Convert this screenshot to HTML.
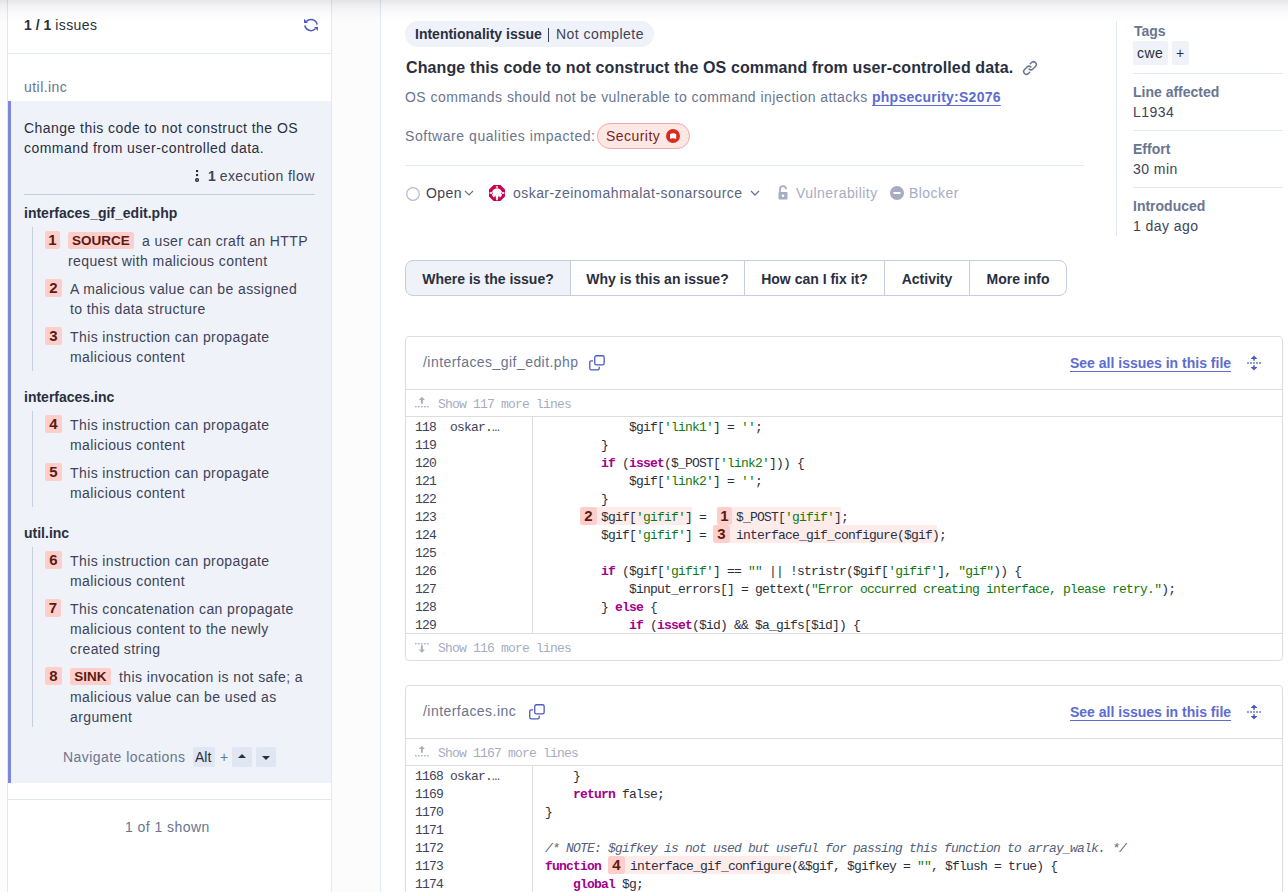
<!DOCTYPE html>
<html><head><meta charset="utf-8">
<style>
*{box-sizing:border-box;margin:0;padding:0}
html,body{width:1288px;height:892px;overflow:hidden;background:#fff}
body{font-family:"Liberation Sans",sans-serif;font-size:14px;line-height:20px;color:#3e4357;position:relative}
.a{position:absolute;white-space:nowrap}
.rg{letter-spacing:0.45px}
.sub{color:#6a7590}
.b{font-weight:700}
#shadow{position:absolute;left:0;top:0;width:1288px;height:22px;background:linear-gradient(rgba(20,25,50,0.11),rgba(20,25,50,0.06) 25%,rgba(20,25,50,0.025) 55%,rgba(20,25,50,0));z-index:50;pointer-events:none}
/* left */
#lgut{position:absolute;left:0;top:0;width:8px;height:892px;background:#fcfcfd;border-right:1px solid #e1e6f3}
#mgut{position:absolute;left:331px;top:0;width:50px;height:892px;background:#fcfcfd;border-left:1px solid #e1e6f3;border-right:1px solid #e1e6f3}
#sel{position:absolute;left:8px;top:101px;width:323px;height:682px;background:#eff2f9;border-left:3px solid #7e86d9}
.hl{position:absolute;height:1px;background:#e1e6f3}
.vl{position:absolute;width:1px;background:#c5cddf}
.badge{position:absolute;height:18px;background:#fecfca;color:#5c1a12;font-weight:700;font-size:15px;line-height:18px;text-align:center;border-radius:2px}
.item{position:absolute;left:70px;width:250px;white-space:normal;line-height:20px;letter-spacing:0.4px}
.kbd{position:absolute;height:20px;background:#e1e6f3;border-radius:2px;top:747px}
/* main */
.pill{position:absolute;border-radius:14px}
.tab{position:absolute;top:260px;height:36px;border:1px solid #c5cddf;font-weight:700;color:#2a2f40;line-height:36px;text-align:center;background:#fff}
.box{position:absolute;left:405px;width:878px;border:1px solid #dddddd;border-radius:4px;background:#fff;overflow:hidden}
.mono{font-family:"Liberation Mono",monospace;font-size:13px;letter-spacing:-0.8px}
.ln{position:absolute;left:9px;color:#3e4357}
.code{position:absolute;white-space:pre;color:#2a2f40}
.k{color:#a3008c;font-weight:700}
.s{color:#11790f}
.c{color:#56607a;font-style:italic}
.cb{position:absolute;height:18px;background:#fecfca;color:#5c1a12;font-weight:700;font-family:"Liberation Sans",sans-serif;font-size:15px;line-height:18px;text-align:center;border-radius:2px}
.chl{position:absolute;height:18px;background:#feeceb}
</style></head><body>
<div id="shadow"></div>
<div id="lgut"></div>
<div id="mgut"></div>
<div id="sel"></div>

<!-- LEFT PANEL -->
<div class="hl" style="left:8px;top:53px;width:323px"></div>
<div class="a" style="left:24px;top:15px;color:#2a2f40"><span class="b">1 / 1</span> <span class="rg">issues</span></div>
<svg class="a" style="left:298px;top:12px" width="26" height="26" viewBox="0 0 26 26"><g fill="none" stroke="#4b5bc0" stroke-width="1.5"><path d="M19.2 12.6A6.3 6.3 0 0 0 8.3 9.6"/><path d="M6.8 13.4A6.3 6.3 0 0 0 17.4 16.8"/></g><path d="M6 6.8V10.9H10z" fill="#4b5bc0"/><path d="M16 15.1H20V19.1z" fill="#4b5bc0"/></svg>
<div class="a sub rg" style="left:24px;top:77px">util.inc</div>
<div class="a rg" style="left:24px;top:118px;color:#2a2f40;line-height:20px">Change this code to not construct the OS<br>command from user-controlled data.</div>
<div class="a" style="left:191px;top:166px;color:#3e4357"><svg style="position:absolute;left:3.2px;top:3px" width="6" height="16" viewBox="0 0 6 16"><rect x="2" y="1" width="2.1" height="2.1" fill="#2a2f40"/><rect x="2" y="5" width="2.1" height="2.1" fill="#2a2f40"/><circle cx="3.05" cy="11" r="1.45" fill="#8a91a8" stroke="#2a2f40" stroke-width="1.2"/></svg><span style="margin-left:17px" class="b">1</span> <span class="rg">execution flow</span></div>
<div class="hl" style="left:24px;top:194px;width:291px;background:#c5cddf"></div>

<div class="a b" style="left:24px;top:203px;color:#2a2f40">interfaces_gif_edit.php</div>
<div class="vl" style="left:32px;top:227px;height:144px"></div>
<div class="badge" style="left:45px;top:231px;width:15px">1</div>
<div class="badge" style="left:68px;top:232px;width:66px;height:17px;line-height:17px;font-size:13.5px">SOURCE</div>
<div class="item" style="top:231px;left:68px"><span style="display:inline-block;width:74px"></span>a user can craft an HTTP<br>request with malicious content</div>
<div class="badge" style="left:45px;top:279px;width:17px">2</div>
<div class="item" style="top:279px">A malicious value can be assigned<br>to this data structure</div>
<div class="badge" style="left:45px;top:327px;width:17px">3</div>
<div class="item" style="top:327px">This instruction can propagate<br>malicious content</div>

<div class="a b" style="left:24px;top:387px;color:#2a2f40">interfaces.inc</div>
<div class="vl" style="left:32px;top:411px;height:96px"></div>
<div class="badge" style="left:45px;top:415px;width:17px">4</div>
<div class="item" style="top:415px">This instruction can propagate<br>malicious content</div>
<div class="badge" style="left:45px;top:463px;width:17px">5</div>
<div class="item" style="top:463px">This instruction can propagate<br>malicious content</div>

<div class="a b" style="left:24px;top:523px;color:#2a2f40">util.inc</div>
<div class="vl" style="left:32px;top:547px;height:180px"></div>
<div class="badge" style="left:45px;top:551px;width:17px">6</div>
<div class="item" style="top:551px">This instruction can propagate<br>malicious content</div>
<div class="badge" style="left:45px;top:599px;width:16px">7</div>
<div class="item" style="top:599px">This concatenation can propagate<br>malicious content to the newly<br>created string</div>
<div class="badge" style="left:45px;top:667px;width:17px">8</div>
<div class="badge" style="left:70px;top:668px;width:41px;height:17px;line-height:17px;font-size:13.5px">SINK</div>
<div class="item" style="top:667px"><span style="display:inline-block;width:49px"></span>this invocation is not safe; a<br>malicious value can be used as<br>argument</div>

<div class="a sub rg" style="left:63px;top:747px">Navigate locations</div>
<div class="kbd" style="left:193px;width:22px"></div>
<div class="a" style="left:195px;top:747px;color:#2a2f40">Alt</div>
<div class="a sub" style="left:220px;top:747px">+</div>
<div class="kbd" style="left:232px;width:20px"></div>
<svg class="a" style="left:237px;top:753px" width="10" height="6"><path d="M1 5L5 1L9 5z" fill="#2a2f40"/></svg>
<div class="kbd" style="left:256px;width:20px"></div>
<svg class="a" style="left:261px;top:755px" width="10" height="6"><path d="M1 1L5 5L9 1z" fill="#2a2f40"/></svg>

<div class="hl" style="left:8px;top:799px;width:323px"></div>
<div class="a sub rg" style="left:125px;top:817px">1 of 1 shown</div>

<!-- MAIN HEADER -->
<div class="pill" style="left:405px;top:21px;width:249px;height:26px;background:#eff2f9"></div>
<div class="a b" style="left:415px;top:24px;color:#2a2f40">Intentionality issue</div>
<div class="a" style="left:548px;top:28px;width:1px;height:14px;background:#3e4357"></div>
<div class="a rg" style="left:556px;top:24px;color:#3e4357">Not complete</div>
<div class="a b" style="left:406px;top:56px;font-size:16px;line-height:24px;color:#2a2f40;letter-spacing:0.12px">Change this code to not construct the OS command from user-controlled data.</div>
<svg class="a" style="left:1021.8px;top:59.5px" width="16" height="16" viewBox="0 0 16 16"><path fill="#6a7590" d="M7.775 3.275a.75.75 0 0 0 1.06 1.06l1.25-1.25a2 2 0 1 1 2.83 2.83l-2.5 2.5a2 2 0 0 1-2.83 0 .75.75 0 0 0-1.06 1.06 3.5 3.5 0 0 0 4.95 0l2.5-2.5a3.5 3.5 0 0 0-4.950-4.95l-1.25 1.25Zm-4.69 9.64a2 2 0 0 1 0-2.83l2.5-2.5a2 2 0 0 1 2.83 0 .75.75 0 0 0 1.06-1.06 3.5 3.5 0 0 0-4.95 0l-2.5 2.5a3.5 3.5 0 0 0 4.95 4.95l1.25-1.25a.75.75 0 0 0-1.06-1.06l-1.25 1.25a2 2 0 0 1-2.83 0Z"/></svg>
<div class="a sub rg" style="left:405px;top:87px">OS commands should not be vulnerable to command injection attacks</div>
<div class="a b" style="left:872px;top:87px;color:#5d6cd0;text-decoration:underline;text-underline-offset:3px;letter-spacing:0.25px">phpsecurity:S2076</div>
<div class="a sub rg" style="left:405px;top:126px;letter-spacing:0.55px">Software qualities impacted:</div>
<div class="pill" style="left:597px;top:123px;width:93px;height:26px;background:#fee8e6;border:1px solid #f5a8a1"></div>
<div class="a rg" style="left:606px;top:126px;color:#7d1f17">Security</div>
<svg class="a" style="left:666px;top:129px" width="14" height="14" viewBox="0 0 14 14"><circle cx="7" cy="7" r="7" fill="#d92b1e"/><path d="M4 5.2Q7 3.4 10.2 5.2V10Q7 8.4 4 10Z" fill="#fff"/></svg>
<div class="hl" style="left:405px;top:165px;width:679px"></div>

<svg class="a" style="left:406px;top:187px" width="14" height="14" viewBox="0 0 14 14"><circle cx="7" cy="7" r="6.3" fill="none" stroke="#b4bbd0" stroke-width="1.2"/></svg>
<div class="a rg" style="left:426px;top:183px;color:#3e4357">Open</div>
<svg class="a" style="left:464px;top:189px" width="10" height="8" viewBox="0 0 10 8"><path d="M1 2L5 6L9 2" fill="none" stroke="#6a7590" stroke-width="1.2"/></svg>
<svg class="a" style="left:489px;top:185px" width="16" height="16" viewBox="0 0 16 16"><path d="M4.6 0H11.4L16 4.6V11.4L11.4 16H4.6L0 11.4V4.6z" fill="#c9004f"/><circle cx="8" cy="8.4" r="5.2" fill="#fff"/><path d="M2.2 6.6L4.2 8.2L2.6 9.8z M13.8 6.6L11.8 8.2L13.4 9.8z" fill="#c9004f"/><rect x="6.8" y="1.2" width="2.4" height="1.6" rx="0.8" fill="#fff"/><rect x="0.6" y="7.2" width="2.6" height="1.6" fill="#fff"/><rect x="12.8" y="7.2" width="2.6" height="1.6" fill="#fff"/><path d="M4.6 13.6L6.2 10.6L7.2 13.6z M8.8 13.6L9.8 10.6L11.4 13.6z" fill="#c9004f"/><rect x="7.2" y="12.8" width="1.6" height="2.4" fill="#fff"/></svg>
<div class="a rg" style="left:513px;top:183px;color:#5b6383">oskar-zeinomahmalat-sonarsource</div>
<svg class="a" style="left:750px;top:189px" width="10" height="8" viewBox="0 0 10 8"><path d="M1 2L5 6L9 2" fill="none" stroke="#6a7590" stroke-width="1.3"/></svg>
<svg class="a" style="left:777px;top:185px" width="12" height="15" viewBox="0 0 12 15"><path d="M3 7V4.2A3 3 0 0 1 9 4.2" fill="none" stroke="#a6adc2" stroke-width="1.8"/><rect x="1.5" y="7" width="9" height="7.5" rx="1" fill="#a6adc2"/><circle cx="6" cy="10.7" r="1.3" fill="#fff"/></svg>
<div class="a rg" style="left:796px;top:183px;color:#a6adc2">Vulnerability</div>
<svg class="a" style="left:890px;top:186px" width="14" height="14" viewBox="0 0 14 14"><circle cx="7" cy="7" r="7" fill="#a6adc2"/><rect x="3.5" y="6" width="7" height="2" fill="#fff"/></svg>
<div class="a rg" style="left:909px;top:183px;color:#a6adc2">Blocker</div>

<!-- RIGHT SIDEBAR -->
<div class="a" style="left:1116px;top:21px;width:1px;height:215px;background:#e1e6f3"></div>
<div class="a b sub" style="left:1134px;top:21px">Tags</div>
<div class="a" style="left:1133px;top:41px;width:35px;height:24px;background:#eff2f9;border-radius:2px"></div>
<div class="a rg" style="left:1137px;top:43px;color:#2a2f40">cwe</div>
<div class="a" style="left:1172px;top:41px;width:17px;height:24px;background:#eff2f9;border-radius:2px"></div>
<div class="a" style="left:1176px;top:43px;color:#2a2f40">+</div>
<div class="hl" style="left:1133px;top:73px;width:150px"></div>
<div class="a b sub" style="left:1133px;top:82px">Line affected</div>
<div class="a rg" style="left:1133px;top:102px;color:#3e4357">L1934</div>
<div class="hl" style="left:1133px;top:130px;width:150px"></div>
<div class="a b sub" style="left:1133px;top:139px">Effort</div>
<div class="a rg" style="left:1133px;top:159px;color:#3e4357">30 min</div>
<div class="hl" style="left:1133px;top:187px;width:150px"></div>
<div class="a b sub" style="left:1133px;top:196px">Introduced</div>
<div class="a rg" style="left:1133px;top:216px;color:#3e4357">1 day ago</div>

<!-- TABS -->
<div class="tab" style="left:405px;width:166px;background:#eff2f9;border-radius:8px 0 0 8px">Where is the issue?</div>
<div class="tab" style="left:570px;width:175px">Why is this an issue?</div>
<div class="tab" style="left:744px;width:141px">How can I fix it?</div>
<div class="tab" style="left:884px;width:86px">Activity</div>
<div class="tab" style="left:969px;width:98px;border-radius:0 8px 8px 0">More info</div>
<!-- CODE -->
<div class="box" style="top:336px;height:325px"></div>
<div class="a sub rg" style="left:423px;top:352px">/interfaces_gif_edit.php</div>
<svg class="a" style="left:587px;top:354px" width="20" height="20" viewBox="0 0 20 20"><g fill="none" stroke="#4b5bc0" stroke-width="1.3" stroke-linecap="round"><rect x="7.75" y="1.75" width="9.4" height="9.2" rx="1.6"/><path d="M5.6 6.85H4.35A1.6 1.6 0 0 0 2.75 8.45V14.25A1.6 1.6 0 0 0 4.35 15.85H10.65A1.6 1.6 0 0 0 12.25 14.25V13.2"/></g></svg>
<div class="a b" style="left:1070px;top:353px;color:#5d6cd0;text-decoration:underline;text-underline-offset:3px">See all issues in this file</div>
<svg class="a" style="left:1246px;top:355px" width="16" height="16" viewBox="0 0 16 16"><path fill="#4b5bc0" d="m8.177.677 2.896 2.896a.25.25 0 0 1-.177.427H8.75v1.25a.75.75 0 0 1-1.5 0V4H5.104a.25.25 0 0 1-.177-.427L7.823.677a.25.25 0 0 1 .354 0ZM7.25 10.75a.75.75 0 0 1 1.5 0V12h2.146a.25.25 0 0 1 .177.427l-2.896 2.896a.25.25 0 0 1-.354 0l-2.896-2.896A.25.25 0 0 1 5.104 12H7.25v-1.25Zm-5-2a.75.75 0 0 0 0-1.5h-.5a.75.75 0 0 0 0 1.5h.5ZM6 8a.75.75 0 0 1-.75.75h-.5a.75.75 0 0 1 0-1.5h.5A.75.75 0 0 1 6 8Zm2.25.75a.75.75 0 0 0 0-1.5h-.5a.75.75 0 0 0 0 1.5h.5ZM12 8a.75.75 0 0 1-.75.75h-.5a.75.75 0 0 1 0-1.5h.5A.75.75 0 0 1 12 8Zm2.25.75a.75.75 0 0 0 0-1.5h-.5a.75.75 0 0 0 0 1.5h.5Z"/></svg>
<div class="hl" style="left:405px;top:389px;width:878px;background:#dddddd"></div>
<svg class="a" style="left:415px;top:395px" width="16" height="16" viewBox="0 0 16 16"><g fill="#a6adc2"><path d="M3.9 5L6.9 1.8L9.9 5z"/><rect x="5.95" y="4.6" width="1.9" height="4.1"/><rect x="0.1" y="11" width="1.5" height="1.4"/><rect x="3.1" y="11" width="1.5" height="1.4"/><rect x="6.1" y="11" width="1.5" height="1.4"/><rect x="9.1" y="11" width="1.5" height="1.4"/><rect x="12.1" y="11" width="1.5" height="1.4"/></g></svg>
<div class="a mono" style="left:438px;top:396px;line-height:18px;color:#a6adc2">Show 117 more lines</div>
<div class="hl" style="left:405px;top:416px;width:878px;background:#dddddd"></div>
<div class="a" style="left:532px;top:417px;width:1px;height:216px;background:#dddddd"></div>
<div class="chl" style="left:597px;top:507px;width:95px"></div>
<div class="chl" style="left:732px;top:507px;width:109px"></div>
<div class="chl" style="left:730px;top:525px;width:207px"></div>
<div class="cb" style="left:580px;top:507px;width:17px">2</div>
<div class="cb" style="left:717px;top:507px;width:15px">1</div>
<div class="cb" style="left:713px;top:525px;width:17px">3</div>
<div class="a mono" style="left:415px;top:419px;line-height:18px;color:#3e4357">118</div>
<div class="a mono" style="left:415px;top:437px;line-height:18px;color:#3e4357">119</div>
<div class="a mono" style="left:415px;top:455px;line-height:18px;color:#3e4357">120</div>
<div class="a mono" style="left:415px;top:473px;line-height:18px;color:#3e4357">121</div>
<div class="a mono" style="left:415px;top:491px;line-height:18px;color:#3e4357">122</div>
<div class="a mono" style="left:415px;top:509px;line-height:18px;color:#3e4357">123</div>
<div class="a mono" style="left:415px;top:527px;line-height:18px;color:#3e4357">124</div>
<div class="a mono" style="left:415px;top:545px;line-height:18px;color:#3e4357">125</div>
<div class="a mono" style="left:415px;top:563px;line-height:18px;color:#3e4357">126</div>
<div class="a mono" style="left:415px;top:581px;line-height:18px;color:#3e4357">127</div>
<div class="a mono" style="left:415px;top:599px;line-height:18px;color:#3e4357">128</div>
<div class="a mono" style="left:415px;top:617px;line-height:18px;color:#3e4357">129</div>
<div class="a mono" style="left:450px;top:419px;line-height:18px;color:#3e4357">oskar.…</div>
<div class="code mono" style="left:545px;top:419px;line-height:18px">            $gif[<span class="s">'link1'</span>] = <span class="s">''</span>;</div>
<div class="code mono" style="left:545px;top:437px;line-height:18px">        }</div>
<div class="code mono" style="left:545px;top:455px;line-height:18px">        <span class="k">if</span> (<span class="k">isset</span>($_POST[<span class="s">'link2'</span>])) {</div>
<div class="code mono" style="left:545px;top:473px;line-height:18px">            $gif[<span class="s">'link2'</span>] = <span class="s">''</span>;</div>
<div class="code mono" style="left:545px;top:491px;line-height:18px">        }</div>
<div class="code mono" style="left:545px;top:509px;line-height:18px">        $gif[<span class="s">'gifif'</span>] = <span style="display:inline-block;width:23px"></span>$_POST[<span class="s">'gifif'</span>];</div>
<div class="code mono" style="left:545px;top:527px;line-height:18px">        $gif[<span class="s">'gifif'</span>] = <span style="display:inline-block;width:23px"></span>interface_gif_configure($gif);</div>
<div class="code mono" style="left:545px;top:545px;line-height:18px"></div>
<div class="code mono" style="left:545px;top:563px;line-height:18px">        <span class="k">if</span> ($gif[<span class="s">'gifif'</span>] == <span class="s">""</span> || !stristr($gif[<span class="s">'gifif'</span>], <span class="s">"gif"</span>)) {</div>
<div class="code mono" style="left:545px;top:581px;line-height:18px">            $input_errors[] = gettext(<span class="s">"Error occurred creating interface, please retry."</span>);</div>
<div class="code mono" style="left:545px;top:599px;line-height:18px">        } <span class="k">else</span> {</div>
<div class="code mono" style="left:545px;top:617px;line-height:18px">            <span class="k">if</span> (<span class="k">isset</span>($id) &amp;&amp; $a_gifs[$id]) {</div>
<div class="hl" style="left:405px;top:633px;width:878px;background:#dddddd"></div>
<svg class="a" style="left:415px;top:639px" width="16" height="16" viewBox="0 0 16 16"><g fill="#a6adc2"><rect x="0.1" y="4" width="1.5" height="1.4"/><rect x="3.1" y="4" width="1.5" height="1.4"/><rect x="6.1" y="4" width="1.5" height="1.4"/><rect x="9.1" y="4" width="1.5" height="1.4"/><rect x="12.1" y="4" width="1.5" height="1.4"/><rect x="5.95" y="6.3" width="1.9" height="4.4"/><path d="M3.9 10.4L6.9 14L9.9 10.4z"/></g></svg>
<div class="a mono" style="left:438px;top:640px;line-height:18px;color:#a6adc2">Show 116 more lines</div><div class="box" style="top:685px;height:226px"></div>
<div class="a sub rg" style="left:423px;top:701px">/interfaces.inc</div>
<svg class="a" style="left:527px;top:703px" width="20" height="20" viewBox="0 0 20 20"><g fill="none" stroke="#4b5bc0" stroke-width="1.3" stroke-linecap="round"><rect x="7.75" y="1.75" width="9.4" height="9.2" rx="1.6"/><path d="M5.6 6.85H4.35A1.6 1.6 0 0 0 2.75 8.45V14.25A1.6 1.6 0 0 0 4.35 15.85H10.65A1.6 1.6 0 0 0 12.25 14.25V13.2"/></g></svg>
<div class="a b" style="left:1070px;top:702px;color:#5d6cd0;text-decoration:underline;text-underline-offset:3px">See all issues in this file</div>
<svg class="a" style="left:1246px;top:704px" width="16" height="16" viewBox="0 0 16 16"><path fill="#4b5bc0" d="m8.177.677 2.896 2.896a.25.25 0 0 1-.177.427H8.75v1.25a.75.75 0 0 1-1.5 0V4H5.104a.25.25 0 0 1-.177-.427L7.823.677a.25.25 0 0 1 .354 0ZM7.25 10.75a.75.75 0 0 1 1.5 0V12h2.146a.25.25 0 0 1 .177.427l-2.896 2.896a.25.25 0 0 1-.354 0l-2.896-2.896A.25.25 0 0 1 5.104 12H7.25v-1.25Zm-5-2a.75.75 0 0 0 0-1.5h-.5a.75.75 0 0 0 0 1.5h.5ZM6 8a.75.75 0 0 1-.75.75h-.5a.75.75 0 0 1 0-1.5h.5A.75.75 0 0 1 6 8Zm2.25.75a.75.75 0 0 0 0-1.5h-.5a.75.75 0 0 0 0 1.5h.5ZM12 8a.75.75 0 0 1-.75.75h-.5a.75.75 0 0 1 0-1.5h.5A.75.75 0 0 1 12 8Zm2.25.75a.75.75 0 0 0 0-1.5h-.5a.75.75 0 0 0 0 1.5h.5Z"/></svg>
<div class="hl" style="left:405px;top:738px;width:878px;background:#dddddd"></div>
<svg class="a" style="left:415px;top:744px" width="16" height="16" viewBox="0 0 16 16"><g fill="#a6adc2"><path d="M3.9 5L6.9 1.8L9.9 5z"/><rect x="5.95" y="4.6" width="1.9" height="4.1"/><rect x="0.1" y="11" width="1.5" height="1.4"/><rect x="3.1" y="11" width="1.5" height="1.4"/><rect x="6.1" y="11" width="1.5" height="1.4"/><rect x="9.1" y="11" width="1.5" height="1.4"/><rect x="12.1" y="11" width="1.5" height="1.4"/></g></svg>
<div class="a mono" style="left:438px;top:745px;line-height:18px;color:#a6adc2">Show 1167 more lines</div>
<div class="hl" style="left:405px;top:765px;width:878px;background:#dddddd"></div>
<div class="a" style="left:532px;top:766px;width:1px;height:144px;background:#dddddd"></div>
<div class="chl" style="left:625px;top:856px;width:166px"></div>
<div class="cb" style="left:608px;top:856px;width:17px">4</div>
<div class="a mono" style="left:415px;top:768px;line-height:18px;color:#3e4357">1168</div>
<div class="a mono" style="left:415px;top:786px;line-height:18px;color:#3e4357">1169</div>
<div class="a mono" style="left:415px;top:804px;line-height:18px;color:#3e4357">1170</div>
<div class="a mono" style="left:415px;top:822px;line-height:18px;color:#3e4357">1171</div>
<div class="a mono" style="left:415px;top:840px;line-height:18px;color:#3e4357">1172</div>
<div class="a mono" style="left:415px;top:858px;line-height:18px;color:#3e4357">1173</div>
<div class="a mono" style="left:415px;top:876px;line-height:18px;color:#3e4357">1174</div>
<div class="a mono" style="left:415px;top:894px;line-height:18px;color:#3e4357">1175</div>
<div class="a mono" style="left:450px;top:768px;line-height:18px;color:#3e4357">oskar.…</div>
<div class="code mono" style="left:545px;top:768px;line-height:18px">    }</div>
<div class="code mono" style="left:545px;top:786px;line-height:18px">    <span class="k">return</span> false;</div>
<div class="code mono" style="left:545px;top:804px;line-height:18px">}</div>
<div class="code mono" style="left:545px;top:822px;line-height:18px"></div>
<div class="code mono" style="left:545px;top:840px;line-height:18px"><span class="c">/* NOTE: $gifkey is not used but useful for passing this function to array_walk. */</span></div>
<div class="code mono" style="left:545px;top:858px;line-height:18px"><span class="k">function</span> <span style="display:inline-block;width:22px"></span>interface_gif_configure(&amp;$gif, $gifkey = <span class="s">""</span>, $flush = true) {</div>
<div class="code mono" style="left:545px;top:876px;line-height:18px">    <span class="k">global</span> $g;</div>
<div class="code mono" style="left:545px;top:894px;line-height:18px"></div>
</body></html>
